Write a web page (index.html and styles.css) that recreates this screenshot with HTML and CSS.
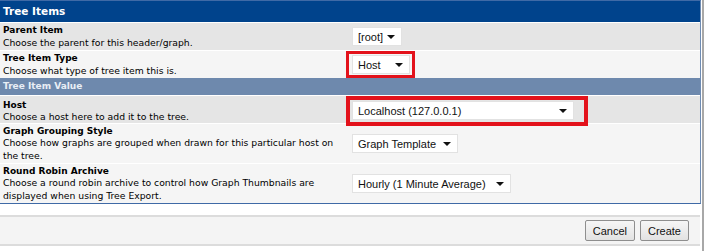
FILE: index.html
```html
<!DOCTYPE html>
<html lang="en">

<head>
    <meta charset="UTF-8">
    <meta name="viewport" content="width=device-width, initial-scale=1.0">
    <title>Tree Items</title>
    <link rel="stylesheet" href="styles.css">
</head>

<body>
    <div class="page">
        <section class="panel">
            <h2 class="panel-title">Tree Items</h2>
            <div class="row odd">
                <div class="label">
                    <b>Parent Item</b>
                    <span>Choose the parent for this header/graph.</span>
                </div>
                <div class="field">
                    <div class="select w-root">[root]<i class="caret"></i></div>
                </div>
            </div>
            <div class="row even">
                <div class="label">
                    <b>Tree Item Type</b>
                    <span>Choose what type of tree item this is.</span>
                </div>
                <div class="field">
                    <div class="mark mark-host">
                        <div class="select w-host">Host<i class="caret"></i></div>
                    </div>
                </div>
            </div>
            <h3 class="sub-title">Tree Item Value</h3>
            <div class="row odd">
                <div class="label">
                    <b>Host</b>
                    <span>Choose a host here to add it to the tree.</span>
                </div>
                <div class="field">
                    <div class="mark mark-wide">
                        <div class="select w-localhost">Localhost (127.0.0.1)<i class="caret"></i></div>
                    </div>
                </div>
            </div>
            <div class="row even tall">
                <div class="label">
                    <b>Graph Grouping Style</b>
                    <span>Choose how graphs are grouped when drawn for this particular host on the tree.</span>
                </div>
                <div class="field">
                    <div class="select w-template">Graph Template<i class="caret"></i></div>
                </div>
            </div>
            <div class="row even tall">
                <div class="label">
                    <b>Round Robin Archive</b>
                    <span>Choose a round robin archive to control how Graph Thumbnails are displayed when using Tree Export.</span>
                </div>
                <div class="field">
                    <div class="select w-hourly">Hourly (1 Minute Average)<i class="caret"></i></div>
                </div>
            </div>
        </section>
        <div class="actions">
            <button class="btn">Cancel</button>
            <button class="btn">Create</button>
        </div>
    </div>
</body>

</html>
```

FILE: styles.css
```css
body {
    margin: 0;
    background: #fff;
    font-family: "DejaVu Sans", Verdana, sans-serif;
    color: #000;
}
.page {
    width: 702px;
    height: 251px;
    border-right: 2px solid #a8a8a8;
}
.panel {
    width: 700px;
    border-top: 1px solid #3f6aa6;
    border-right: 1px solid #6f8cb3;
    border-bottom: 1px solid #3f6aa6;
}
.panel-title {
    margin: 0;
    height: 21px;
    line-height: 21px;
    padding-left: 3px;
    background: #00438c;
    color: #fff;
    font-size: 10.5px;
    font-weight: bold;
}
.sub-title {
    margin: 0;
    height: 17px;
    line-height: 17px;
    padding-left: 3px;
    background: #6e89ad;
    color: #e9eef5;
    font-size: 9px;
    font-weight: bold;
}
.row {
    display: grid;
    grid-template-columns: 346px 1fr;
    align-items: center;
    border-top: 1px solid #fff;
}
.odd {
    background: #e5e5e5;
    height: 27px;
}
.even {
    background: #f5f5f5;
    height: 27px;
}
.tall {
    height: 39px;
}
.label {
    padding-left: 3px;
    font-size: 9.25px;
    line-height: 12.5px;
}
.label b,
.label span {
    display: block;
}
.label b {
    font-size: 9px;
}
.label span {
    padding-right: 8px;
}
.field {
    display: flex;
    align-items: center;
}
.select {
    display: flex;
    align-items: center;
    justify-content: space-between;
    box-sizing: border-box;
    height: 19px;
    padding: 0 6px 0 5px;
    margin-left: 6px;
    background: #fff;
    border: 1px solid #e2e2e2;
    font-family: "Liberation Sans", Tahoma, sans-serif;
    font-size: 11px;
    color: #111;
}
.caret {
    width: 0;
    height: 0;
    border-left: 4px solid transparent;
    border-right: 4px solid transparent;
    border-top: 4px solid #111;
}
.w-root {
    width: 50px;
}
.w-host {
    width: 58px;
    margin-left: 2px;
}
.w-localhost {
    width: 222px;
    margin-left: 2px;
}
.w-template {
    width: 106px;
}
.w-hourly {
    width: 159px;
}
.mark {
    border: 3px solid #e3121b;
    padding: 1px 2px 1px 1px;
    margin-left: 0;
}
.mark-wide {
    border-width: 4px;
    padding: 1px 10px 2px 0;
}
.actions {
    display: flex;
    justify-content: flex-end;
    align-items: center;
    gap: 5px;
    width: 700px;
    height: 31px;
    box-sizing: border-box;
    margin-top: 11px;
    padding-right: 11px;
    background: #f4f4f4;
    border-top: 2px solid #dcdcdc;
    border-bottom: 2px solid #dcdcdc;
}
.btn {
    height: 21px;
    padding: 0 7px;
    background: linear-gradient(#f6f6f6, #e2e2e2);
    border: 1px solid #8e8e8e;
    border-radius: 2px;
    font-family: "Liberation Sans", Tahoma, sans-serif;
    font-size: 11px;
    color: #111;
}
```
